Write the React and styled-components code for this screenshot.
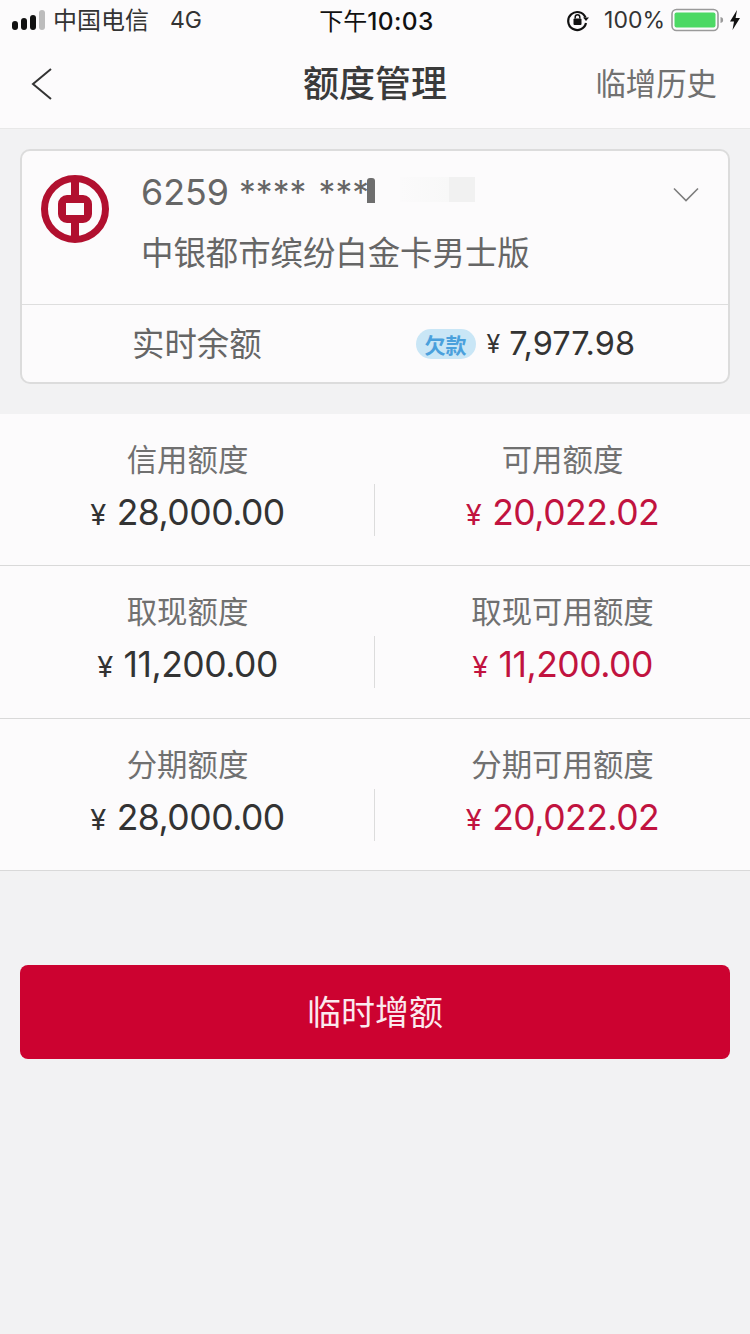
import React from "react";
import styled, { createGlobalStyle } from "styled-components";

const FONT = `Inter, "Noto Sans CJK SC", sans-serif`;

const GlobalStyle = createGlobalStyle`
    html, body {
        margin: 0;
        padding: 0;
        background: #f2f2f3;
    }
    body {
        font-family: ${FONT};
    }
`;

const rows = [
    [
        { label: "信用额度", amount: "28,000.00" },
        { label: "可用额度", amount: "20,022.02", red: true },
    ],
    [
        { label: "取现额度", amount: "11,200.00" },
        { label: "取现可用额度", amount: "11,200.00", red: true },
    ],
    [
        { label: "分期额度", amount: "28,000.00" },
        { label: "分期可用额度", amount: "20,022.02", red: true },
    ],
];

const Signal = () => (
    <svg width="34" height="20" viewBox="0 0 34 20">
        <rect x="0" y="11" width="6" height="9" rx="3" fill="#111" />
        <rect x="9" y="8" width="6" height="12" rx="3" fill="#111" />
        <rect x="18" y="5" width="6" height="15" rx="3" fill="#111" />
        <rect x="27" y="0" width="6" height="20" rx="3" fill="#bcbcbc" />
    </svg>
);

const RotationLock = () => (
    <svg width="24" height="24" viewBox="0 0 24 24">
        <path
            d="M19.5 9.5A9 9 0 1 0 20 15"
            fill="none"
            stroke="#111"
            strokeWidth="2.2"
        />
        <path d="M17 9.5h6l-3 3.6z" fill="#111" />
        <rect x="7.5" y="10.5" width="8" height="6.5" rx="1" fill="#111" />
        <path
            d="M9.2 10.5V9a2.3 2.3 0 0 1 4.6 0v1.5"
            fill="none"
            stroke="#111"
            strokeWidth="1.5"
        />
    </svg>
);

const Battery = () => (
    <BatteryIcon width="54" height="24" viewBox="0 0 54 24">
        <rect
            x="1"
            y="1.500"
            width="46"
            height="21"
            rx="4.5"
            fill="none"
            stroke="#9a9a9a"
            strokeWidth="1.6"
        />
        <rect x="3.500" y="4.500" width="41" height="15" rx="2" fill="#4cd964" />
        <path d="M49.5 9c2 .4 2.6 1.4 2.6 3s-.6 2.6-2.6 3z" fill="#9a9a9a" />
    </BatteryIcon>
);

const Bolt = () => (
    <svg width="12" height="22" viewBox="0 0 12 22">
        <path d="M8 1 1 12.5h4L3.5 21 11 9H6.6z" fill="#111" />
    </svg>
);

const Logo = () => (
    <svg width="68" height="68" viewBox="0 0 68 68">
        <circle cx="34" cy="34" r="30.5" fill="none" stroke="#b1102f" strokeWidth="7" />
        <rect x="30" y="2" width="8" height="64" fill="#b1102f" />
        <rect
            x="21"
            y="24"
            width="26"
            height="20"
            rx="5"
            fill="none"
            stroke="#b1102f"
            strokeWidth="8"
        />
        <rect x="25" y="28" width="18" height="12" fill="#fcfbfc" />
    </svg>
);

const Amount = ({ value, red }) => (
    <AmountRow $red={red}>
        <Yen>¥</Yen>
        <span>{value}</span>
    </AmountRow>
);

const App = () => {
    return (
        <Page>
            <GlobalStyle />
            <Header>
                <StatusBar>
                    <StatusLeft>
                        <Signal />
                        <Carrier>中国电信</Carrier>
                        <Network>4G</Network>
                    </StatusLeft>
                    <Clock>
                        <ClockPrefix>下午</ClockPrefix>10:03
                    </Clock>
                    <StatusRight>
                        <RotationLock />
                        <BatteryText>100%</BatteryText>
                        <Battery />
                        <Bolt />
                    </StatusRight>
                </StatusBar>
                <NavBar>
                    <BackButton>
                        <svg width="24" height="34" viewBox="0 0 24 34">
                            <path
                                d="M21 2 3 17l18 15"
                                fill="none"
                                stroke="#333"
                                strokeWidth="2"
                            />
                        </svg>
                    </BackButton>
                    <Title>额度管理</Title>
                    <NavAction>临增历史</NavAction>
                </NavBar>
            </Header>

            <CardSection>
                <Card>
                    <CardTop>
                        <Logo />
                        <CardInfo>
                            <CardNumber>
                                6259 <Stars>**** ***</Stars>
                                <MaskDark />
                                <MaskLight />
                            </CardNumber>
                            <CardName>中银都市缤纷白金卡男士版</CardName>
                        </CardInfo>
                        <Chevron width="26" height="16" viewBox="0 0 26 16">
                            <path
                                d="m1 1.500 12 12 12-12"
                                fill="none"
                                stroke="#7d7d7d"
                                strokeWidth="1.6"
                            />
                        </Chevron>
                    </CardTop>
                    <CardBottom>
                        <BalanceLabel>实时余额</BalanceLabel>
                        <BalanceValue>
                            <DebtBadge>欠款</DebtBadge>
                            <BalanceYen>¥</BalanceYen>
                            <BalanceAmount>7,977.98</BalanceAmount>
                        </BalanceValue>
                    </CardBottom>
                </Card>
            </CardSection>

            <LimitList>
                {rows.map((row, index) => (
                    <LimitRow key={`row-${index}`}>
                        {row.map((cell) => (
                            <LimitCell key={cell.label}>
                                <LimitLabel>{cell.label}</LimitLabel>
                                <Amount value={cell.amount} red={cell.red} />
                            </LimitCell>
                        ))}
                        <RowDivider />
                    </LimitRow>
                ))}
            </LimitList>

            <ButtonWrap>
                <PrimaryButton>临时增额</PrimaryButton>
            </ButtonWrap>
        </Page>
    );
};

export default App;

const Page = styled.div`
    width: 750px;
    min-height: 1334px;
    background: #f2f2f3;
    overflow: hidden;
`;

const Header = styled.header`
    background: #fcfbfc;
    border-bottom: 1px solid #e8e8e8;
    height: 128px;
`;

const StatusBar = styled.div`
    height: 40px;
    display: grid;
    grid-template-columns: 1fr auto 1fr;
    align-items: center;
    padding: 0 9px 0 12px;
    color: #111;
`;

const StatusLeft = styled.div`
    display: flex;
    align-items: center;
`;

const Carrier = styled.span`
    margin: 0 0 3px 7px;
    font-size: 24px;
    color: #333;
`;

const Network = styled.span`
    margin-left: 21px;
    font-size: 23px;
    color: #333;
`;

const Clock = styled.span`
    margin-bottom: 2px;
    font-size: 24.5px;
    font-weight: 500;
    letter-spacing: 0.4px;
    color: #111;
`;

const ClockPrefix = styled.span`
    font-size: 24px;
    font-weight: 400;
    letter-spacing: 0;
`;

const StatusRight = styled.div`
    display: flex;
    align-items: center;
    justify-content: flex-end;
`;

const BatteryText = styled.span`
    margin: 0 6px 0 14px;
    font-size: 23px;
    color: #333;
`;

const BatteryIcon = styled.svg`
    margin-right: 4px;
`;

const NavBar = styled.nav`
    height: 88px;
    position: relative;
    display: flex;
    align-items: center;
    justify-content: center;

    svg {
        display: block;
    }
`;

const BackButton = styled.div`
    position: absolute;
    left: 30px;
    top: 27px;
    line-height: 0;
`;

const Title = styled.h1`
    margin: 0;
    font-size: 36px;
    font-weight: 500;
    color: #3a3a3a;
    position: relative;
    top: -3px;
`;

const NavAction = styled.span`
    position: absolute;
    right: 33px;
    top: 20px;
    font-size: 30.4px;
    color: #707070;
`;

const CardSection = styled.section`
    padding: 20px 20px 30px 20px;
`;

const Card = styled.div`
    background: #fcfbfc;
    border: 2px solid #dcdcdc;
    border-radius: 10px;
    height: 235px;
    box-sizing: border-box;
    display: flex;
    flex-direction: column;
`;

const CardTop = styled.div`
    height: 154px;
    box-sizing: border-box;
    padding: 24px 30px 0 19px;
    display: flex;
    align-items: flex-start;
    border-bottom: 1px solid #dedede;
    position: relative;
`;

const CardInfo = styled.div`
    margin: -2px 0 0 32px;
    flex: 1;
`;

const CardNumber = styled.div`
    font-size: 35.8px;
    line-height: 38px;
    color: #666;
    position: relative;
`;

const Stars = styled.span`
    font-size: 33.5px;
    word-spacing: 3px;
`;

const MaskDark = styled.span`
    position: absolute;
    left: 226px;
    top: 5px;
    width: 8px;
    height: 25px;
    background: #6e6e6e;
    border-radius: 3px 3px 0 0;
`;

const MaskLight = styled.span`
    position: absolute;
    left: 259px;
    top: 4px;
    width: 75px;
    height: 25px;
    background: linear-gradient(90deg, #fbfafb 0%, #f8f8f8 65%, #f1f1f1 66%, #f1f1f1 100%);
`;

const CardName = styled.div`
    margin-top: 22px;
    font-size: 32.4px;
    line-height: 40px;
    color: #666;
`;

const Chevron = styled.svg`
    margin-top: 12px;
    position: relative;
    left: 1px;
`;

const CardBottom = styled.div`
    flex: 1;
    display: flex;
    align-items: center;
    padding: 0 93px 2px 110px;
    justify-content: space-between;
`;

const BalanceLabel = styled.span`
    margin-bottom: 2px;
    font-size: 32.4px;
    color: #666;
`;

const BalanceValue = styled.div`
    margin-top: 2px;
    display: flex;
    align-items: center;
`;

const DebtBadge = styled.span`
    width: 60px;
    height: 30px;
    border-radius: 15px;
    background: #c9e6f6;
    color: #4aa0dc;
    font-size: 21px;
    font-weight: 700;
    display: flex;
    align-items: center;
    justify-content: center;
`;

const BalanceYen = styled.span`
    margin-left: 11px;
    font-size: 25px;
    color: #333;
`;

const BalanceAmount = styled.span`
    margin-left: 9px;
    font-size: 32.5px;
    color: #333;
`;

const LimitList = styled.section`
    background: #fcfbfc;
`;

const LimitRow = styled.div`
    height: 152.33px;
    box-sizing: border-box;
    display: grid;
    grid-template-columns: 1fr 1fr;
    border-bottom: 1px solid #d9d9d9;
    position: relative;
`;

const RowDivider = styled.span`
    position: absolute;
    left: 374px;
    top: 70px;
    width: 1px;
    height: 52px;
    background: #dcdcdc;
`;

const LimitCell = styled.div`
    display: flex;
    flex-direction: column;
    align-items: center;
    padding-top: 26px;
`;

const LimitLabel = styled.div`
    font-size: 30.4px;
    line-height: 40px;
    color: #707070;
`;

const AmountRow = styled.div`
    margin-top: 11px;
    display: flex;
    align-items: baseline;
    font-size: 35.5px;
    line-height: 44px;
    letter-spacing: -0.5px;
    color: ${({ $red }) => ($red ? "#c1133f" : "#333")};
`;

const Yen = styled.span`
    font-size: 29px;
    margin-right: 11px;
`;

const ButtonWrap = styled.div`
    padding: 94px 20px 0;
`;

const PrimaryButton = styled.button`
    display: block;
    width: 100%;
    height: 94px;
    border: none;
    border-radius: 8px;
    padding: 0 0 3px;
    background: #cc0230;
    color: #fbe9ee;
    font-family: ${FONT};
    font-size: 34px;
`;
